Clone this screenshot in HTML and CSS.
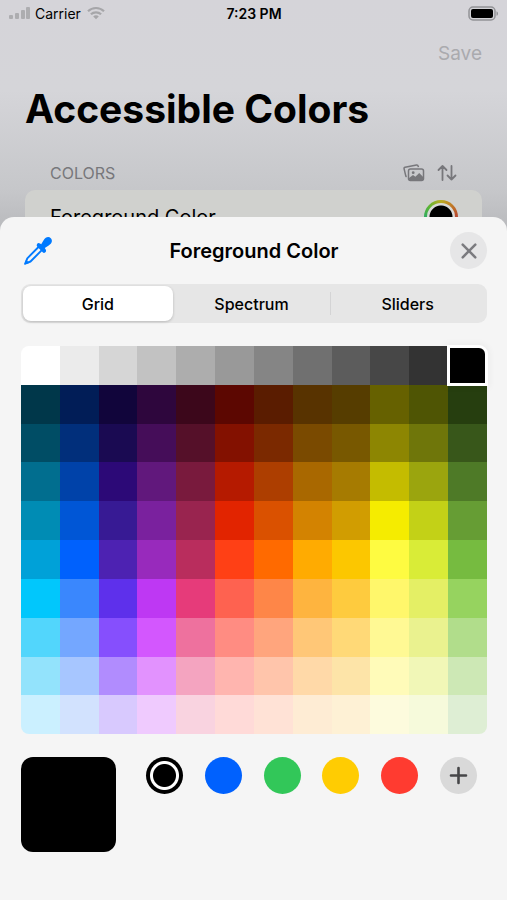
FILE: index.html
```html
<!DOCTYPE html>
<html lang="en">
<head>
<meta charset="utf-8">
<meta name="viewport" content="width=device-width, initial-scale=1">
<title>Accessible Colors</title>
<link rel="stylesheet" href="styles.css">
</head>
<body>
<div class="app">
  <div class="status">
    <div class="status-left">
      <svg width="22" height="14" viewBox="0 0 22 14" fill="#adadb0" aria-hidden="true">
        <rect x="0" y="9" width="4" height="4" rx="1"/><rect x="6" y="7" width="4" height="6" rx="1"/><rect x="12" y="4" width="4" height="9" rx="1"/><rect x="17" y="1" width="4" height="12" rx="1"/>
      </svg>
      <span>Carrier</span>
      <svg class="wifi" width="18" height="14" viewBox="0 0 18 14" fill="none" stroke="#a6a6a9" stroke-width="2.2" aria-hidden="true">
        <path d="M1 5.2C5.4.9 12.600.9 17 5.200"/><path d="M3.900 8.300c2.900-2.700 7.300-2.700 10.200 0"/><path d="M9 13.200 6.200 10.400c1.600-1.500 4-1.500 5.600 0z" fill="#a6a6a9" stroke="none"/>
      </svg>
    </div>
    <time class="clock">7:23 PM</time>
    <div class="status-right">
      <svg width="31" height="15" viewBox="0 0 31 15" aria-hidden="true">
        <rect x="1" y="1" width="26" height="13" rx="4" fill="#d3d3d7" stroke="#929296" stroke-width="1.500"/>
        <rect x="3" y="3" width="22" height="9" rx="2"/>
        <path d="M28.500 5.200c2 .8 2 3.800 0 4.600z" fill="#929296"/>
      </svg>
    </div>
  </div>
  <header class="top">
    <div class="nav"><button class="save" type="button" disabled>Save</button></div>
    <h1>Accessible Colors</h1>
  </header>
  <section class="behind">
    <div class="section-head">
      <h2>COLORS</h2>
      <div class="tools">
        <button type="button" aria-label="Photos">
          <svg width="22" height="18" viewBox="0 0 22 18" fill="none" stroke="#77777b" stroke-width="1.500" stroke-linejoin="round" aria-hidden="true">
            <path d="M3.800 12.600 2.900 12.400 1.100 4.800Q.8 3.500 2.100 3.200L13.500 1.100Q14.800.9 15.200 2.200L15.400 3.200"/>
            <rect x="5.500" y="5" width="15" height="11.500" rx="2"/>
            <path d="m6 14 4-3 2.400 1.700 3.800-3.700 4 3.900V15q0 1.200-1.300 1.200H7.200Q6 16.200 6 15z" fill="#77777b" stroke="none"/>
            <circle cx="10.200" cy="8.700" r="1.400" fill="#77777b" stroke="none"/>
          </svg>
        </button>
        <button type="button" aria-label="Swap colors">
          <svg width="20" height="18" viewBox="0 0 20 18" fill="none" stroke="#77777b" stroke-width="1.800" stroke-linecap="round" stroke-linejoin="round" aria-hidden="true">
            <path d="M5.500 16V2M1.500 6l4-4 4 4M14.500 2v13.500M10.500 11.500l4 4 4-4"/>
          </svg>
        </button>
      </div>
    </div>
    <div class="row">
      <span>Foreground Color</span>
      <span class="well"></span>
    </div>
  </section>

  <main class="sheet">
    <div class="sheet-head">
      <button class="dropper" type="button" aria-label="Pick a color from the screen">
        <svg width="30" height="30" viewBox="0 0 30 30" aria-hidden="true">
          <path d="M17 9.500 4.300 22.300 2.200 27.600 7.500 25.500 20.300 12.700" fill="none" stroke="#007aff" stroke-width="1.900" stroke-linejoin="round"/>
          <path d="m1.200 28.700 1.900-5 3.200 3.200z" fill="#007aff"/>
          <path d="M14.200 7.800q1.200-1.300 2.800-.2l1.200.6 2.400-3.900C22.800.7 25.800.3 27.800 2.200c1.900 2 1.500 5-2.100 7.200l-3.900 2.500.6 1.100c1 1.600 1 2.500-.3 3.500q-1.200 1-2.400-.2L14.300 10.700q-1.300-1.500-.1-2.900z" fill="#007aff"/>
        </svg>
      </button>
      <h2>Foreground Color</h2>
      <button class="close" type="button" aria-label="Close">
        <svg width="16" height="16" viewBox="0 0 16 16" stroke="#7b7b7f" stroke-width="2.500" stroke-linecap="round" aria-hidden="true"><path d="m1.700 1.700 12.600 12.600M14.300 1.700 1.700 14.300"/></svg>
      </button>
    </div>
    <div class="segments" role="radiogroup" aria-label="Picker mode">
      <label><input type="radio" name="mode" checked><span>Grid</span></label>
      <label><input type="radio" name="mode"><span>Spectrum</span></label>
      <label><input type="radio" name="mode"><span>Sliders</span></label>
    </div>
    <div class="grid" id="grid" role="radiogroup" aria-label="Colors"></div>
    <div class="saved">
      <div class="current"></div>
      <div class="dots">
        <button class="dot black" type="button" aria-label="Black"></button>
        <button class="dot blue" type="button" aria-label="Blue"></button>
        <button class="dot green" type="button" aria-label="Green"></button>
        <button class="dot yellow" type="button" aria-label="Yellow"></button>
        <button class="dot red" type="button" aria-label="Red"></button>
        <button class="dot add" type="button" aria-label="Add color">
          <svg width="19" height="19" viewBox="0 0 19 19" stroke="#464648" stroke-width="2.600" stroke-linecap="round" aria-hidden="true"><path d="M9.500 2v15M2 9.500h15"/></svg>
        </button>
      </div>
    </div>
  </main>
</div>
<script src="grid.js"></script>
</body>
</html>
```
FILE: styles.css
```css
* { box-sizing: border-box; }

body {
  margin: 0;
  font-family: Inter, "Liberation Sans", sans-serif;
  color: #000;
  background: #f5f5f5;
}

h1, h2 { margin: 0; }

button {
  display: flex;
  align-items: center;
  justify-content: center;
  padding: 0;
  border: 0;
  background: none;
  font: inherit;
}

svg { display: block; }

.app {
  display: flex;
  flex-direction: column;
  min-height: 100vh;
  background: linear-gradient(#d5d4d9 0, #d5d5d9 90px, #c6c7ca 190px, #b5b6b9 240px);
}

.status {
  display: grid;
  grid-template-columns: 1fr auto 1fr;
  align-items: center;
  height: 28px;
  padding: 0 8px 2px 9px;
  font-size: 14px;
}

.status-left { display: flex; align-items: center; gap: 4px; }
.wifi { margin-left: 2px; }
.clock { font-weight: 600; }
.status-right { display: flex; justify-content: flex-end; }

.top { padding: 0 25px; }

.nav {
  display: flex;
  justify-content: flex-end;
  align-items: center;
  height: 50px;
}

.save { font-size: 19px; color: #aaaaae; }

h1 {
  font-size: 39px;
  line-height: 62px;
  font-weight: 700;
}

.behind { padding: 16px 25px 0; }

.section-head {
  display: flex;
  align-items: center;
  justify-content: space-between;
  height: 34px;
  padding: 0 25px;
}

.section-head h2 {
  font-size: 16px;
  font-weight: 400;
  color: #77777b;
}

.tools { display: flex; gap: 12px; }

.row {
  display: flex;
  align-items: center;
  justify-content: space-between;
  height: 54px;
  padding: 0 24px 0 25px;
  border-radius: 10px;
  background: #d0d1ce;
  font-size: 20px;
}

.well {
  width: 34px;
  height: 34px;
  border: 3px solid transparent;
  border-radius: 50%;
  background:
    radial-gradient(circle, #000 0 11px, #d9dad7 12px) padding-box,
    conic-gradient(#b9ad22, #c28a24 30deg, #b94f2c 80deg, #a93b6e 140deg, #4c55bb 200deg, #2bab66 265deg, #5cb534 310deg, #b9ad22) border-box;
}

.sheet {
  position: relative;
  flex: 1;
  margin-top: -27px;
  padding: 15px 20px 47px 21px;
  border-radius: 14px 14px 0 0;
  background: #f5f5f5;
}

.sheet-head {
  display: grid;
  grid-template-columns: 37px 1fr 37px;
  align-items: center;
}

.sheet-head h2 {
  font-size: 20px;
  line-height: 24px;
  font-weight: 600;
  text-align: center;
}

.dropper { justify-content: flex-start; padding-left: 2px; }

.close {
  width: 37px;
  height: 37px;
  border-radius: 50%;
  background: #e6e6e7;
}

.segments {
  display: grid;
  grid-template-columns: 150fr 158fr 155fr;
  margin-top: 15px;
  padding: 2px;
  height: 39px;
  border-radius: 9px;
  background: #e6e6e6;
  font-size: 16px;
  font-weight: 500;
}

.segments label {
  position: relative;
  display: flex;
  align-items: center;
  justify-content: center;
  border-radius: 8px;
}

.segments input {
  position: absolute;
  opacity: 0;
  margin: 0;
}

.segments label:has(:checked) {
  background: #fff;
  box-shadow: 0 1px 3px rgba(0, 0, 0, 0.2);
}

.segments label:last-child::before {
  content: "";
  position: absolute;
  left: 0;
  top: 6px;
  bottom: 6px;
  width: 1px;
  background: #d4d4d5;
}

.grid {
  display: grid;
  grid-template-columns: repeat(12, 1fr);
  grid-template-rows: repeat(10, 1fr);
  aspect-ratio: 12 / 10;
  margin-top: 23px;
}

.cell {
  appearance: none;
  margin: 0;
  min-width: 0;
}

.cell:first-child { border-top-left-radius: 8px; }
.cell:nth-child(12) { border-top-right-radius: 8px; }
.cell:nth-child(109) { border-bottom-left-radius: 8px; }
.cell:last-child { border-bottom-right-radius: 8px; }

.cell:checked {
  z-index: 1;
  border: 2px solid #fff;
  box-shadow: 0 0 0 1px #fff, 0 0 6px 3px rgba(0, 0, 0, 0.04);
}

.saved {
  display: flex;
  align-items: flex-start;
  gap: 30px;
  margin-top: 23px;
}

.current {
  width: 95px;
  height: 95px;
  border-radius: 12px;
  background: #000;
}

.dots {
  display: flex;
  flex: 1;
  justify-content: space-between;
  padding-right: 10px;
}

.dot {
  width: 37px;
  height: 37px;
  border-radius: 50%;
}

.black { background: radial-gradient(circle, #000 0 11px, #fff 12px 14px, #000 15px); }
.blue { background: #0061fe; }
.green { background: #32c759; }
.yellow { background: #ffcc02; }
.red { background: #ff3b30; }
.add { background: #d9d9d9; }
```
FILE: grid.js
```js
const rows = [
  "FFFFFF EBEBEB D6D6D6 C2C2C2 ADADAD 999999 858585 707070 5C5C5C 474747 333333 000000",
  "00374A 011D57 11053B 2E063D 3C071B 5C0701 5A1C00 583300 563D00 666100 4F5504 263E0F",
  "004D65 012F7B 1A0A52 450D59 551029 831100 7B2900 7A4A00 785800 8D8602 6F760A 38571A",
  "016E8F 0042A9 2C0977 61187C 791A3D B51A00 AD3E00 A96800 A67B01 C4BC00 9BA50E 4E7A27",
  "008CB4 0056D6 371A94 7A219E 99244F E22400 DA5100 D38301 D19D01 F5EC00 C3D117 669D34",
  "00A1D8 0061FD 4D22B2 982ABC B92D5D FF4015 FF6A00 FFAB01 FCC700 FEFB41 D9EC37 76BB40",
  "01C7FC 3A87FD 5E30EB BE38F3 E63B7A FE6250 FE8648 FEB43F FECB3E FFF76B E4EF65 96D35F",
  "52D6FC 74A7FF 864FFD D357FE EE719E FF8C82 FFA57D FFC777 FFD977 FFF994 EAF28F B1DD8B",
  "93E3FC A7C6FF B18CFE E292FE F4A4C0 FFB5AF FFC5AB FFD9A8 FDE4A8 FFFBB9 F1F7B7 CDE8B5",
  "CBF0FF D2E2FE D8C9FE EFCAFE F9D3E0 FFDAD8 FFE2D6 FEECD4 FEF1D5 FDFBDD F6FADB DEEED4"
];

const grid = document.getElementById("grid");
for (const hex of rows.join(" ").split(" ")) {
  const cell = document.createElement("input");
  cell.type = "radio";
  cell.name = "color";
  cell.className = "cell";
  cell.value = "#" + hex;
  cell.checked = hex === "000000";
  cell.setAttribute("aria-label", "#" + hex);
  cell.style.backgroundColor = "#" + hex;
  grid.append(cell);
}
```
